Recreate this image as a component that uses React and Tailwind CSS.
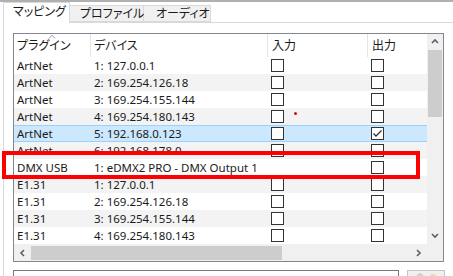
import React from "react";

const rows = [
  { plugin: "ArtNet", device: "1: 127.0.0.1", input: true },
  { plugin: "ArtNet", device: "2: 169.254.126.18", input: true },
  { plugin: "ArtNet", device: "3: 169.254.155.144", input: true },
  { plugin: "ArtNet", device: "4: 169.254.180.143", input: true },
  { plugin: "ArtNet", device: "5: 192.168.0.123", input: true, checked: true, selected: true },
  { plugin: "ArtNet", device: "6: 192.168.178.0", input: true },
  { plugin: "DMX USB", device: "1: eDMX2 PRO - DMX Output 1", input: false },
  { plugin: "E1.31", device: "1: 127.0.0.1", input: true },
  { plugin: "E1.31", device: "2: 169.254.126.18", input: true },
  { plugin: "E1.31", device: "3: 169.254.155.144", input: true },
  { plugin: "E1.31", device: "4: 169.254.180.143", input: true },
];

function Checkbox({ checked }) {
  return (
    <span className="flex h-[13px] w-[13px] items-center justify-center border border-[#333333] bg-white">
      {checked && (
        <svg width="11" height="11" viewBox="0 0 11 11">
          <path d="M1.5 5.5 L4 8 L9.5 2.5" fill="none" stroke="#333" strokeWidth="1.3" />
        </svg>
      )}
    </span>
  );
}

// small scrollbar arrows
function Chevron({ dir }) {
  const paths = {
    up: "M1 5 L4 2 L7 5",
    down: "M1 2 L4 5 L7 2",
    left: "M5 1 L2 4 L5 7",
    right: "M2 1 L5 4 L2 7",
  };
  return (
    <svg width="8" height="8" viewBox="0 0 8 8">
      <path d={paths[dir]} fill="none" stroke="#606060" strokeWidth="1.6" />
    </svg>
  );
}

export default function App() {
  return (
    <div className="relative h-[276px] w-[453px] overflow-hidden border-t-2 border-[#b0b0b0] bg-white font-['Noto_Sans','Noto_Sans_CJK_JP',sans-serif] text-[11.5px] text-[#1a1a1a] [font-feature-settings:'palt']">
      {/* tabs */}
      <div className="flex h-[20px] items-end whitespace-nowrap pl-[3px] text-[12px]">
        <div className="relative z-10 -mb-px flex h-[21px] w-[67px] items-center border border-b-0 border-[#d9d9d9] bg-white pl-[9px] pb-[2px]">
          マッピング
        </div>
        <div className="flex h-[17px] w-[74px] items-center border-y border-r border-[#d9d9d9] bg-[#f0f0f0] pl-[10px]">
          プロファイル
        </div>
        <div className="flex h-[17px] w-[67px] items-center border-y border-r border-[#d9d9d9] bg-[#f0f0f0] pl-[12px]">
          オーディオ
        </div>
      </div>

      {/* tab panel */}
      <div className="ml-[3px] h-full border-l border-t border-[#d9d9d9] pl-[9px] pt-[10px]">
        <div className="flex h-[229px] w-[431px] border border-[#828790]">
          <div className="flex w-[413px] flex-col">
            {/* header */}
            <div className="relative flex h-[23px] items-center text-[12px]">
              <svg className="absolute left-[34px] top-[0px]" width="8" height="5" viewBox="0 0 8 5">
                <path d="M1 4.5 L4 1.2 L7 4.5" fill="none" stroke="#9aa3ad" strokeWidth="1" />
              </svg>
              <div className="w-[76px] pl-[3px]">プラグイン</div>
              <div className="h-full w-[177px] border-l border-[#e5e5e5] pl-[3px] leading-[23px]">デバイス</div>
              <div className="h-full w-[100px] border-l border-[#e5e5e5] pl-[4px] leading-[23px]">入力</div>
              <div className="h-full w-[60px] border-l border-[#e5e5e5] pl-[4px] leading-[23px]">出力</div>
            </div>

            {/* rows */}
            {rows.map((row, i) => (
              <div
                key={i}
                className={
                  "flex h-[17px] items-center whitespace-nowrap " +
                  (row.selected
                    ? "border-y border-[#99d1ff] bg-[#cce8ff]"
                    : i % 2 === 1
                    ? "bg-[#f3f3f3]"
                    : "bg-white")
                }
              >
                <div className="w-[76px] pl-[3px]">{row.plugin}</div>
                <div className="w-[177px] pl-[4px]">{row.device}</div>
                <div className="w-[100px] pl-[4px]">{row.input && <Checkbox />}</div>
                <div className="w-[60px] pl-[4px]">
                  <Checkbox checked={row.checked} />
                </div>
              </div>
            ))}

            {/* horizontal scrollbar */}
            <div className="flex h-[17px] items-center bg-[#f0f0f0]">
              <div className="flex w-[17px] justify-center">
                <Chevron dir="left" />
              </div>
              <div className="h-[14px] w-[251px] bg-[#cdcdcd]" />
              <div className="flex-1" />
              <div className="flex w-[17px] justify-center">
                <Chevron dir="right" />
              </div>
            </div>
          </div>

          {/* vertical scrollbar */}
          <div className="flex w-[16px] flex-col bg-[#f0f0f0]">
            <div className="flex h-[16px] items-center justify-center">
              <Chevron dir="up" />
            </div>
            <div className="mx-[1px] h-[67px] bg-[#cdcdcd]" />
            <div className="flex-1" />
            <div className="flex h-[16px] items-center justify-center">
              <Chevron dir="down" />
            </div>
            <div className="h-[17px]" />
          </div>
        </div>

        {/* bottom controls */}
        <div className="mt-[8px] flex gap-[8px]">
          <div className="h-[20px] w-[386px] border border-[#7a7a7a] bg-white" />
          <div className="flex h-[20px] w-[38px] items-start justify-center gap-[6px] border border-[#c4c4c4] bg-[#f0f0f0] pt-[2px]">
            <svg width="8" height="6" viewBox="0 0 8 6">
              <path d="M4 1 L4 6 M1 3 L4 0.5 L7 3" fill="none" stroke="#c8c8c8" strokeWidth="1.2" />
            </svg>
            <span className="mt-[1px] h-[5px] w-[6px] rounded-full bg-[#f3d6a8]" />
          </div>
        </div>
      </div>

      {/* red annotation box and dot */}
      <div className="absolute left-[2px] top-[149px] h-[28px] w-[418px] border-4 border-[#ff0000]" />
      <div className="absolute left-[294px] top-[110px] h-[3px] w-[3px] rounded-full bg-[#d01010]" />
    </div>
  );
}
